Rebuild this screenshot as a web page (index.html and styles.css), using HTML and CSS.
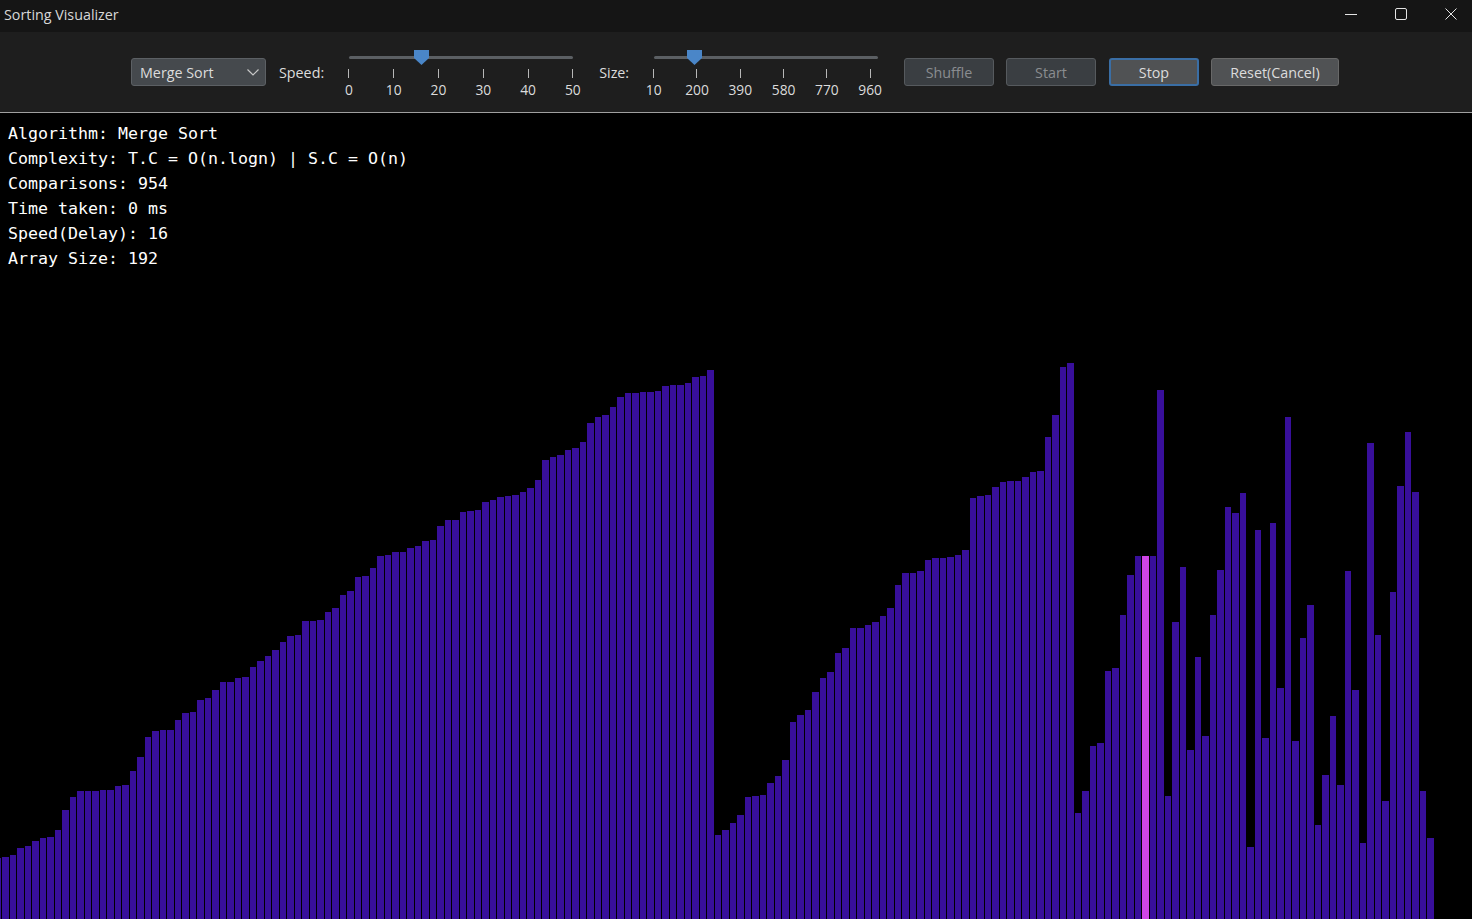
FILE: index.html
```html
<!DOCTYPE html>
<html lang="en">
<head>
<meta charset="utf-8">
<title>Sorting Visualizer</title>
<link rel="stylesheet" href="styles.css">
</head>
<body>
<div class="window">
  <header class="titlebar">
    <span class="title">Sorting Visualizer</span>
    <div class="win-controls">
      <svg class="win-icon" viewBox="0 0 12 12"><path d="M0 6.5H12"/></svg>
      <svg class="win-icon" viewBox="0 0 12 12"><rect x="0.5" y="0.5" width="11" height="11" rx="1.5"/></svg>
      <svg class="win-icon" viewBox="0 0 12 12"><path d="M0.5 0.5L11.5 11.5M11.5 0.5L0.5 11.5"/></svg>
    </div>
  </header>
  <nav class="toolbar">
    <div class="combo">
      <span>Merge Sort</span>
      <svg class="chevron" viewBox="0 0 12 7"><path d="M0.5 0.5L6 6L11.5 0.5"/></svg>
    </div>
    <span class="label label-speed">Speed:</span>
    <div class="slider slider-speed">
      <div class="track"></div>
      <svg class="thumb thumb-speed" viewBox="0 0 15 15"><path d="M0 0H15V8L7.5 15L0 8Z"/></svg>
      <div class="scale">
        <div class="mark"><i class="tick"></i><span>0</span></div>
        <div class="mark"><i class="tick"></i><span>10</span></div>
        <div class="mark"><i class="tick"></i><span>20</span></div>
        <div class="mark"><i class="tick"></i><span>30</span></div>
        <div class="mark"><i class="tick"></i><span>40</span></div>
        <div class="mark"><i class="tick"></i><span>50</span></div>
      </div>
    </div>
    <span class="label label-size">Size:</span>
    <div class="slider slider-size">
      <div class="track"></div>
      <svg class="thumb thumb-size" viewBox="0 0 15 15"><path d="M0 0H15V8L7.5 15L0 8Z"/></svg>
      <div class="scale">
        <div class="mark"><i class="tick"></i><span>10</span></div>
        <div class="mark"><i class="tick"></i><span>200</span></div>
        <div class="mark"><i class="tick"></i><span>390</span></div>
        <div class="mark"><i class="tick"></i><span>580</span></div>
        <div class="mark"><i class="tick"></i><span>770</span></div>
        <div class="mark"><i class="tick"></i><span>960</span></div>
      </div>
    </div>
    <button class="btn btn-disabled btn-shuffle">Shuffle</button>
    <button class="btn btn-disabled btn-start">Start</button>
    <button class="btn btn-focus btn-stop">Stop</button>
    <button class="btn btn-reset">Reset(Cancel)</button>
  </nav>
  <main class="stage">
    <div class="info">
      <div>Algorithm: Merge Sort</div>
      <div>Complexity: T.C = O(n.logn) | S.C = O(n)</div>
      <div>Comparisons: 954</div>
      <div>Time taken: 0 ms</div>
      <div>Speed(Delay): 16</div>
      <div>Array Size: 192</div>
    </div>
    <div class="bars">
<div class="bar" style="height:61px"></div><div class="bar" style="height:62px"></div><div class="bar" style="height:64px"></div><div class="bar" style="height:71px"></div><div class="bar" style="height:73px"></div><div class="bar" style="height:78px"></div><div class="bar" style="height:81px"></div><div class="bar" style="height:82px"></div><div class="bar" style="height:89px"></div><div class="bar" style="height:109px"></div>
<div class="bar" style="height:122px"></div><div class="bar" style="height:128px"></div><div class="bar" style="height:128px"></div><div class="bar" style="height:128px"></div><div class="bar" style="height:129px"></div><div class="bar" style="height:129px"></div><div class="bar" style="height:133px"></div><div class="bar" style="height:134px"></div><div class="bar" style="height:148px"></div><div class="bar" style="height:162px"></div>
<div class="bar" style="height:182px"></div><div class="bar" style="height:188px"></div><div class="bar" style="height:189px"></div><div class="bar" style="height:189px"></div><div class="bar" style="height:199px"></div><div class="bar" style="height:206px"></div><div class="bar" style="height:207px"></div><div class="bar" style="height:219px"></div><div class="bar" style="height:221px"></div><div class="bar" style="height:229px"></div>
<div class="bar" style="height:237px"></div><div class="bar" style="height:237px"></div><div class="bar" style="height:241px"></div><div class="bar" style="height:242px"></div><div class="bar" style="height:252px"></div><div class="bar" style="height:258px"></div><div class="bar" style="height:263px"></div><div class="bar" style="height:269px"></div><div class="bar" style="height:277px"></div><div class="bar" style="height:283px"></div>
<div class="bar" style="height:284px"></div><div class="bar" style="height:298px"></div><div class="bar" style="height:298px"></div><div class="bar" style="height:299px"></div><div class="bar" style="height:307px"></div><div class="bar" style="height:311px"></div><div class="bar" style="height:324px"></div><div class="bar" style="height:328px"></div><div class="bar" style="height:342px"></div><div class="bar" style="height:343px"></div>
<div class="bar" style="height:351px"></div><div class="bar" style="height:363px"></div><div class="bar" style="height:364px"></div><div class="bar" style="height:367px"></div><div class="bar" style="height:367px"></div><div class="bar" style="height:371px"></div><div class="bar" style="height:373px"></div><div class="bar" style="height:378px"></div><div class="bar" style="height:379px"></div><div class="bar" style="height:393px"></div>
<div class="bar" style="height:399px"></div><div class="bar" style="height:399px"></div><div class="bar" style="height:407px"></div><div class="bar" style="height:408px"></div><div class="bar" style="height:409px"></div><div class="bar" style="height:417px"></div><div class="bar" style="height:419px"></div><div class="bar" style="height:422px"></div><div class="bar" style="height:423px"></div><div class="bar" style="height:424px"></div>
<div class="bar" style="height:427px"></div><div class="bar" style="height:431px"></div><div class="bar" style="height:439px"></div><div class="bar" style="height:459px"></div><div class="bar" style="height:462px"></div><div class="bar" style="height:464px"></div><div class="bar" style="height:469px"></div><div class="bar" style="height:471px"></div><div class="bar" style="height:477px"></div><div class="bar" style="height:496px"></div>
<div class="bar" style="height:502px"></div><div class="bar" style="height:504px"></div><div class="bar" style="height:512px"></div><div class="bar" style="height:522px"></div><div class="bar" style="height:526px"></div><div class="bar" style="height:526px"></div><div class="bar" style="height:527px"></div><div class="bar" style="height:527px"></div><div class="bar" style="height:528px"></div><div class="bar" style="height:533px"></div>
<div class="bar" style="height:534px"></div><div class="bar" style="height:534px"></div><div class="bar" style="height:536px"></div><div class="bar" style="height:542px"></div><div class="bar" style="height:543px"></div><div class="bar" style="height:549px"></div><div class="bar" style="height:84px"></div><div class="bar" style="height:89px"></div><div class="bar" style="height:96px"></div><div class="bar" style="height:104px"></div>
<div class="bar" style="height:122px"></div><div class="bar" style="height:123px"></div><div class="bar" style="height:124px"></div><div class="bar" style="height:136px"></div><div class="bar" style="height:143px"></div><div class="bar" style="height:159px"></div><div class="bar" style="height:197px"></div><div class="bar" style="height:204px"></div><div class="bar" style="height:209px"></div><div class="bar" style="height:227px"></div>
<div class="bar" style="height:241px"></div><div class="bar" style="height:247px"></div><div class="bar" style="height:266px"></div><div class="bar" style="height:271px"></div><div class="bar" style="height:291px"></div><div class="bar" style="height:291px"></div><div class="bar" style="height:294px"></div><div class="bar" style="height:297px"></div><div class="bar" style="height:303px"></div><div class="bar" style="height:311px"></div>
<div class="bar" style="height:334px"></div><div class="bar" style="height:346px"></div><div class="bar" style="height:346px"></div><div class="bar" style="height:348px"></div><div class="bar" style="height:359px"></div><div class="bar" style="height:361px"></div><div class="bar" style="height:361px"></div><div class="bar" style="height:362px"></div><div class="bar" style="height:364px"></div><div class="bar" style="height:369px"></div>
<div class="bar" style="height:421px"></div><div class="bar" style="height:423px"></div><div class="bar" style="height:424px"></div><div class="bar" style="height:432px"></div><div class="bar" style="height:437px"></div><div class="bar" style="height:438px"></div><div class="bar" style="height:438px"></div><div class="bar" style="height:442px"></div><div class="bar" style="height:447px"></div><div class="bar" style="height:448px"></div>
<div class="bar" style="height:482px"></div><div class="bar" style="height:504px"></div><div class="bar" style="height:552px"></div><div class="bar" style="height:556px"></div><div class="bar" style="height:106px"></div><div class="bar" style="height:128px"></div><div class="bar" style="height:173px"></div><div class="bar" style="height:176px"></div><div class="bar" style="height:248px"></div><div class="bar" style="height:251px"></div>
<div class="bar" style="height:304px"></div><div class="bar" style="height:344px"></div><div class="bar" style="height:363px"></div><div class="bar bar-active" style="height:363px"></div><div class="bar" style="height:363px"></div><div class="bar" style="height:529px"></div><div class="bar" style="height:123px"></div><div class="bar" style="height:297px"></div><div class="bar" style="height:352px"></div><div class="bar" style="height:169px"></div>
<div class="bar" style="height:262px"></div><div class="bar" style="height:183px"></div><div class="bar" style="height:304px"></div><div class="bar" style="height:349px"></div><div class="bar" style="height:412px"></div><div class="bar" style="height:406px"></div><div class="bar" style="height:426px"></div><div class="bar" style="height:72px"></div><div class="bar" style="height:389px"></div><div class="bar" style="height:181px"></div>
<div class="bar" style="height:396px"></div><div class="bar" style="height:231px"></div><div class="bar" style="height:502px"></div><div class="bar" style="height:178px"></div><div class="bar" style="height:281px"></div><div class="bar" style="height:314px"></div><div class="bar" style="height:94px"></div><div class="bar" style="height:144px"></div><div class="bar" style="height:203px"></div><div class="bar" style="height:134px"></div>
<div class="bar" style="height:348px"></div><div class="bar" style="height:229px"></div><div class="bar" style="height:76px"></div><div class="bar" style="height:476px"></div><div class="bar" style="height:284px"></div><div class="bar" style="height:118px"></div><div class="bar" style="height:327px"></div><div class="bar" style="height:433px"></div><div class="bar" style="height:487px"></div><div class="bar" style="height:427px"></div>
<div class="bar" style="height:128px"></div><div class="bar" style="height:81px"></div>
    </div>
  </main>
</div>
</body>
</html>
```
FILE: styles.css
```css
* {
  box-sizing: border-box;
}

html,
body {
  margin: 0;
  height: 100%;
  background: #000;
}

body {
  overflow: hidden;
  font-family: "Open Sans", "Noto Sans", sans-serif;
}

.window {
  display: flex;
  flex-direction: column;
  height: 919px;
}

.titlebar {
  display: flex;
  align-items: center;
  justify-content: space-between;
  flex: none;
  height: 32px;
  padding: 0 15px 4px 4px;
  background: #151515;
}

.title {
  color: #d8d8d8;
  font-size: 14.3px;
}

.win-controls {
  display: flex;
  gap: 38px;
}

.win-icon {
  display: block;
  width: 12px;
  height: 12px;
  fill: none;
  stroke: #e4e4e4;
  stroke-width: 1;
}

.toolbar {
  display: flex;
  align-items: center;
  flex: none;
  height: 81px;
  padding: 0 0 1px 131px;
  background: #1e1e1e;
  border-bottom: 1px solid #a0a0a0;
  color: #dcdcdc;
  font-size: 14.3px;
}

.combo {
  display: flex;
  align-items: center;
  justify-content: space-between;
  width: 135px;
  height: 28px;
  padding: 2px 6px 0 8px;
  background: #45494d;
  border: 1px solid #5c6064;
  border-radius: 3px;
}

.chevron {
  width: 12px;
  height: 7px;
  fill: none;
  stroke: #c8c8c8;
  stroke-width: 1.2;
}

.label {
  padding-top: 2px;
}

.label-speed {
  width: 69.4px;
  margin-left: 13px;
}

.label-size {
  width: 54px;
  margin-left: 25.8px;
}

.slider {
  position: relative;
  height: 48px;
  padding-top: 8px;
}

.slider-speed {
  width: 225px;
}

.slider-size {
  width: 217.5px;
}

.track {
  width: 224px;
  height: 3px;
  margin-left: 1px;
  background: #5b5f63;
  border-radius: 2px;
}

.thumb {
  position: absolute;
  top: 2px;
  width: 15px;
  height: 15px;
  fill: #4a86c8;
}

.thumb-speed {
  left: 65.6px;
}

.thumb-size {
  left: 33.8px;
}

.scale {
  display: flex;
  justify-content: space-between;
  margin-top: 10px;
  font-size: 13.8px;
  line-height: 16px;
}

.mark {
  display: flex;
  flex-direction: column;
  align-items: center;
  width: 1px;
  white-space: nowrap;
}

.tick {
  display: block;
  flex: none;
  width: 1px;
  height: 9px;
  margin-bottom: 4px;
  background: #b8b8b8;
}

.btn {
  height: 28px;
  padding: 2px 0 0;
  border: 1px solid #686868;
  border-radius: 3px;
  background: #505254;
  color: #dcdcdc;
  font-family: inherit;
  font-size: 14.3px;
}

.btn-disabled {
  background: #3a3e42;
  border-color: #565a5e;
  color: #8a8d90;
}

.btn-focus {
  border: 2px solid #3a6ea5;
}

.btn-shuffle {
  width: 90px;
  margin-left: 33.3px;
}

.btn-start {
  width: 90px;
  margin-left: 12px;
}

.btn-stop {
  width: 90px;
  margin-left: 13px;
}

.btn-reset {
  width: 128px;
  margin-left: 12px;
}

.stage {
  display: flex;
  flex-direction: column;
  flex: 1;
  min-height: 0;
  background: #000;
}

.info {
  flex: none;
  padding: 8px 0 0 8px;
  color: #fff;
  font-family: "DejaVu Sans Mono", "Liberation Mono", monospace;
  font-size: 16.61px;
  line-height: 25px;
  white-space: nowrap;
}

.bars {
  display: flex;
  align-items: flex-end;
  flex: 1;
  gap: 1px;
  margin-left: -5.5px;
  min-height: 0;
}

.bar {
  flex: none;
  width: 6.5px;
  background: #380f9b;
}

.bar-active {
  background: #cf45e6;
}
```
